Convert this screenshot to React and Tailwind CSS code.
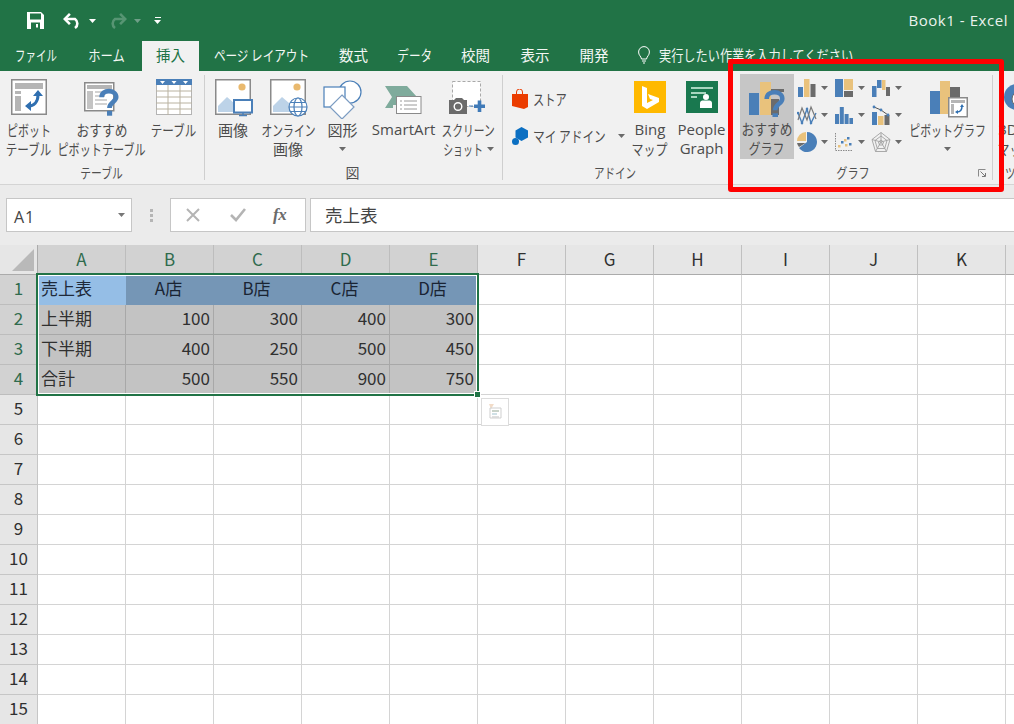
import React from "react";

const jp = "font-['Open_Sans','Noto_Sans_CJK_JP',sans-serif]";

function Caret({ color = "#6a6a6a", className = "" }) {
  return (
    <svg width="7" height="4" viewBox="0 0 7 4" className={className}>
      <path d="M0 0h7L3.500 4z" fill={color} />
    </svg>
  );
}

function L({ children, className = "" }) {
  return <div className={`whitespace-nowrap h-[19px] leading-[19px] text-[15px] ${className}`}>{children}</div>;
}

function Btn({ w, icon, children, className = "" }) {
  return (
    <div className={`flex flex-col items-center shrink-0 ${w} ${className}`}>
      <div className="h-[49px] pt-[8px] flex justify-center w-full">{icon}</div>
      {children}
    </div>
  );
}

const Q = ({ x, y, s = 1, sw = 4.2 }) => (
  <g transform={`translate(${x} ${y}) scale(${s})`}>
    <path d="M1 7C1 3 4 1.500 7.500 1.500S14 3.500 14 6.800c0 4.200-6 4.600-6 9.700" fill="none" stroke="#4a7fb8" strokeWidth={sw} />
    <rect x="5.800" y="19" width="4.600" height="4.400" fill="#4a7fb8" />
  </g>
);

const PivotIcon = () => (
  <svg width="36" height="36" viewBox="0 0 36 36">
    <rect x=".75" y=".75" width="34.500" height="34.500" fill="#fff" stroke="#8a8a8a" strokeWidth="1.500" />
    <rect x="4" y="4" width="28" height="6" fill="#b5b5b5" />
    <rect x="4" y="12" width="6" height="3" fill="#b5b5b5" />
    <rect x="4" y="17" width="6" height="15" fill="#b5b5b5" />
    <path d="M27 16c0 7-4 11-10 11" fill="none" stroke="#2f6fb0" strokeWidth="3" />
    <path d="M27 11l5 6h-10zM14 27l6-5v10z" fill="#2f6fb0" />
  </svg>
);

const RecPivotIcon = () => (
  <svg width="40" height="40" viewBox="0 0 40 40" className="ml-[4px]">
    <rect x=".75" y="3.750" width="29" height="28" fill="#fff" stroke="#8a8a8a" strokeWidth="1.500" />
    <rect x="3" y="6" width="25" height="4" fill="#b5b5b5" />
    <rect x="3" y="12" width="6" height="18" fill="#c4c4c4" />
    <path d="M11 13h14M11 17h10M11 21h12M11 25h12" stroke="#c4c4c4" strokeWidth="1.500" />
    <Q x={16.5} y={10.5} s={1.12} />
  </svg>
);

const TableIcon = () => (
  <svg width="36" height="36" viewBox="0 0 36 36">
    <rect x=".5" y=".5" width="35" height="35" fill="#fff" stroke="#b4b4b4" />
    <rect width="36" height="6" fill="#4a7fb8" />
    <path d="M4 2h5l-2.500 3zM15.500 2h5L18 5zM27 2h5l-2.500 3z" fill="#fff" />
    <path d="M0 12h36M0 18h36M0 24h36M0 30h36M12 6v30M24 6v30" stroke="#b9b2a0" />
  </svg>
);

const Picture = ({ children }) => (
  <svg width="40" height="40" viewBox="0 0 40 40" className="overflow-visible translate-x-[2px]">
    <rect x=".75" y=".75" width="34.500" height="34.500" fill="#fff" stroke="#8a8a8a" strokeWidth="1.500" />
    <circle cx="27" cy="8" r="3.600" fill="#e9b96e" />
    <path d="M3 33V27l9-9 7 6 2 2 4 7z" fill="#bdd3e8" />
    {children}
  </svg>
);

const ImageIcon = () => (
  <Picture>
    <rect x="19" y="21" width="18" height="12.500" fill="#fff" stroke="#4a7fb8" strokeWidth="2" />
    <path d="M28 34v2M24 36.500h8" stroke="#4a7fb8" strokeWidth="1.500" />
  </Picture>
);

const OnlineIcon = () => (
  <Picture>
    <g fill="#fff" stroke="#4a7fb8" strokeWidth="1.200">
      <circle cx="28" cy="28" r="9" />
      <ellipse cx="28" cy="28" rx="4" ry="9" />
      <path d="M19 28h18M20.500 23.500h15M20.500 32.500h15" />
    </g>
  </Picture>
);

const ShapesIcon = () => (
  <svg width="40" height="40" viewBox="0 0 40 40">
    <circle cx="27" cy="13" r="11" fill="#fff" stroke="#4a7fb8" strokeWidth="1.200" />
    <rect x="1" y="8" width="21" height="20" fill="#fff" stroke="#4a7fb8" strokeWidth="1.200" />
    <path d="M19 16l12 12-12 12L7 28z" fill="#fff" stroke="#7c9cc2" strokeWidth="1.200" />
  </svg>
);

const SmartArtIcon = () => (
  <svg width="38" height="36" viewBox="0 0 38 36">
    <path d="M0 3h22l10 11v3H12v5H8v3H0l7-11z" fill="#7fab9c" />
    <rect x="11.500" y="13.500" width="24.500" height="17" fill="#fff" stroke="#8a8a8a" />
    <path d="M15 18h2M19 18h13M15 22h2M19 22h13M15 26h2M19 26h13" stroke="#9a9a9a" />
  </svg>
);

const ScreenIcon = () => (
  <svg width="38" height="36" viewBox="0 0 38 36">
    <rect x="3.500" y="2.500" width="28" height="25" fill="#fff" stroke="#a9a9a9" strokeDasharray="3 2" />
    <path d="M0 21h5l2-2h6l2 2h3v14H0z" fill="#6b6b6b" />
    <circle cx="9" cy="27.500" r="3.800" fill="none" stroke="#fff" strokeWidth="1.400" />
    <path d="M20 27h4" stroke="#4a7fb8" />
    <path d="M25 25.500h11v3.500H25zM28.700 21.500h3.600V33h-3.600z" fill="#3f7ab8" />
  </svg>
);

const BingIcon = () => (
  <svg width="32" height="32" viewBox="0 0 32 32">
    <rect width="32" height="32" fill="#ffb900" />
    <path d="M8 5l5 2v15l6-3-3-1-2-5 11 4v4L13 28l-5-3z" fill="#fff" />
  </svg>
);

const PeopleIcon = () => (
  <svg width="32" height="32" viewBox="0 0 32 32">
    <rect width="32" height="32" fill="#19784f" />
    <path d="M5 6h22v2H5zM5 11h15v2H5zM5 15h6v2H5z" fill="#a8d5bf" />
    <circle cx="20" cy="16" r="3" fill="#fff" />
    <path d="M14 27v-5c0-2 2-2.500 3-2.500h6c1 0 3 .5 3 2.500v5z" fill="#fff" />
  </svg>
);

const ColChart = () => (
  <svg width="18" height="18" viewBox="0 0 18 18">
    <rect x="0" y="8" width="5" height="10" fill="#4a7fb8" />
    <rect x="6" y="0" width="5.500" height="18" fill="#e9c27c" />
    <rect x="12.500" y="5" width="5" height="13" fill="#6b6b6b" />
  </svg>
);
const Treemap = () => (
  <svg width="18" height="18" viewBox="0 0 18 18">
    <rect width="8" height="18" fill="#4a7fb8" />
    <rect x="9" width="9" height="11" fill="#e9c27c" />
    <rect x="9" y="12" width="9" height="6" fill="#6b6b6b" />
  </svg>
);
const Waterfall = () => (
  <svg width="18" height="18" viewBox="0 0 18 18">
    <rect y="7" width="4.500" height="11" fill="#4a7fb8" />
    <rect x="5" y="1" width="4.500" height="8" fill="#4a7fb8" />
    <rect x="10" y="1" width="3.500" height="10" fill="#e9c27c" />
    <rect x="14" y="8" width="4" height="9" fill="#6b6b6b" />
  </svg>
);
const LineChart = () => (
  <svg width="20" height="20" viewBox="0 0 20 20">
    <path d="M1 8l4 10 5-14 4 14 5-10" fill="none" stroke="#4a7fb8" strokeWidth="1.400" />
    <path d="M1 15L5 3l5 12 4-13 5 12" fill="none" stroke="#7a7a7a" strokeWidth="1.200" />
    <g fill="#4a7fb8"><circle cx="5" cy="18" r="1.300" /><circle cx="10" cy="4" r="1.300" /><circle cx="14" cy="18" r="1.300" /><circle cx="1" cy="8" r="1.300" /></g>
  </svg>
);
const Histogram = () => (
  <svg width="18" height="18" viewBox="0 0 18 18">
    <path d="M0 8h4v10H0zM4.800 1h4v17h-4zM9.600 8h4v10h-4zM14.400 12H18v6h-3.600z" fill="#4a7fb8" />
  </svg>
);
const Combo = () => (
  <svg width="18" height="20" viewBox="0 0 18 20">
    <rect y="7" width="5" height="13" fill="#4a7fb8" />
    <rect x="6" y="11" width="5.500" height="9" fill="#e9c27c" />
    <rect x="12.500" y="10" width="5" height="10" fill="#6b6b6b" />
    <path d="M2 2l7 3 7 5" fill="none" stroke="#555" />
    <g fill="#4a7fb8"><circle cx="2" cy="2" r="1.400" /><circle cx="9" cy="5" r="1.400" /><circle cx="16" cy="10" r="1.400" /></g>
  </svg>
);
const Pie = () => (
  <svg width="20" height="20" viewBox="0 0 20 20">
    <path d="M10 10V0a10 10 0 1 1-8 16z" fill="#4a7fb8" />
    <path d="M9 9V0A9 9 0 0 0 0 9z" fill="#e9c27c" />
    <path d="M8.500 11H0a9 9 0 0 0 2 4z" fill="#6b6b6b" />
  </svg>
);
const Scatter = () => (
  <svg width="18" height="18" viewBox="0 0 18 18">
    <path d="M.5 0v17.500H18" fill="none" stroke="#8a8a8a" strokeDasharray="1.500 1" />
    <g fill="#4a7fb8"><rect x="12" y="4" width="2.500" height="2.500" /><rect x="6" y="8" width="2.500" height="2.500" /><rect x="14" y="10" width="2.500" height="2.500" /></g>
    <g fill="#e9c27c"><rect x="9" y="6" width="2.500" height="2.500" /><rect x="3" y="12" width="2.500" height="2.500" /><rect x="10" y="11" width="2.500" height="2.500" /></g>
  </svg>
);
const Radar = () => (
  <svg width="20" height="20" viewBox="0 0 20 20">
    <g fill="none" stroke="#a0a0a0" strokeWidth=".9">
      <path d="M10 .5l9 7-3.500 12h-11L1 7.500z" />
      <path d="M10 4l6 4.500-2.300 8H6.300L4 8.500z" />
      <path d="M10 8l2.500 2-1 3h-3l-1-3z" />
      <path d="M10 .5V10M19 7.500L10 10M15.500 19.500L10 10M4.500 19.500L10 10M1 7.500L10 10" />
    </g>
  </svg>
);

const SmallBtn = ({ icon, w = "w-[37px]" }) => (
  <div className={`${w} h-[27px] flex items-center pl-[1px] gap-[4px]`}>
    <div className="w-[20px] flex justify-center">{icon}</div>
    <Caret />
  </div>
);

const RecChartIcon = () => (
  <svg width="38" height="36" viewBox="0 0 38 36" className="translate-x-[1px]">
    <rect x="0" y="12" width="10" height="22" fill="#4a7fb8" />
    <rect x="11" y="1" width="11" height="33" fill="#e9c27c" />
    <rect x="22" y="8" width="13" height="3" fill="#6b6b6b" />
    <rect x="22" y="18" width="8" height="16" fill="#6b6b6b" />
    <Q x={16.5} y={9.5} s={1.2} sw={3.8} />
  </svg>
);

const PivotChartIcon = () => (
  <svg width="38" height="38" viewBox="0 0 38 38" className="translate-x-[1px]">
    <rect x="0" y="10" width="10" height="23" fill="#4a7fb8" />
    <rect x="10" y="0" width="10" height="33" fill="#e9c27c" />
    <rect x="20" y="6" width="10" height="27" fill="#6b6b6b" />
    <rect x="18.750" y="16.750" width="18.500" height="19" fill="#fff" stroke="#8a8a8a" strokeWidth="1.500" />
    <rect x="21" y="19" width="14" height="3" fill="#b5b5b5" />
    <rect x="21" y="23" width="3" height="10" fill="#b5b5b5" />
    <path d="M32 25c0 4-2 6-5 6" fill="none" stroke="#2f6fb0" strokeWidth="1.500" />
    <path d="M32 23l2 3h-4zM25 31l3-2v4z" fill="#2f6fb0" />
  </svg>
);

const Group = ({ w, label, children }) => (
  <div className={`flex flex-col h-full shrink-0 ${w}`}>
    <div className="flex flex-1">{children}</div>
    {label}
  </div>
);

const GroupLabel = ({ children, className = "" }) => (
  <div className={`h-[21px] mb-px flex justify-center items-center text-[14px] text-[#505050] whitespace-nowrap ${className}`}>{children}</div>
);

const Sep = () => <div className="w-px shrink-0 self-stretch my-[4px] bg-[#cfcfcf]" />;

const tabs = [
  ["ファイル", "w-[72px]", "scale-x-[0.72]"],
  ["ホーム", "w-[70px]", "scale-x-[0.85]"],
  ["挿入", "w-[57px]", "scale-x-100"],
  ["ページ レイアウト", "w-[125px]", "scale-x-[0.8]"],
  ["数式", "w-[59px]", "scale-x-100"],
  ["データ", "w-[64px]", "scale-x-[0.8]"],
  ["校閲", "w-[57px]", "scale-x-100"],
  ["表示", "w-[62px]", "scale-x-100"],
  ["開発", "w-[56px]", "scale-x-100"],
];

function TitleBar() {
  return (
    <div className="h-[41px] flex items-center relative text-white">
      <svg width="17" height="17" viewBox="0 0 17 17" className="ml-[27px]">
        <path d="M0 0h14l3 3v14H0z" fill="#fff" />
        <rect x="3" y="1.500" width="11" height="6" fill="#217346" />
        <rect x="4" y="10.500" width="9" height="6.500" fill="#217346" />
        <rect x="9" y="12" width="2" height="3.500" fill="#fff" />
      </svg>
      <svg width="20" height="16" viewBox="0 0 20 16" className="ml-[19px]">
        <path d="M3 6h9a5.500 5.500 0 0 1 0 9" fill="none" stroke="#fff" strokeWidth="2.600" />
        <path d="M8 0l1.800 1.800L5.500 6l4.300 4.200L8 12 2 6z" fill="#fff" transform="translate(-2 0)" />
      </svg>
      <Caret color="#fff" className="ml-[6px]" />
      <svg width="20" height="16" viewBox="0 0 20 16" className="ml-[11px] opacity-40">
        <path d="M17 6H8a5.500 5.500 0 0 0 0 9" fill="none" stroke="#a9c9b8" strokeWidth="2.600" />
        <path d="M12 0l-1.800 1.800L14.500 6l-4.300 4.200L12 12l6-6z" fill="#a9c9b8" transform="translate(2 0)" />
      </svg>
      <Caret color="#6f9f88" className="ml-[7px]" />
      <div className="ml-[13px] flex flex-col items-center gap-[2px]">
        <div className="w-[6px] h-px bg-white" />
        <Caret color="#fff" />
      </div>
      <div className="ml-auto mr-[6px] text-[15px] tracking-[0.55px] text-[#eaf2ed] font-['Open_Sans',sans-serif]">Book1 - Excel</div>
    </div>
  );
}

function Tabs() {
  return (
    <div className="h-[30px] flex items-stretch text-[14.5px]">
      {tabs.map(([t, w, s]) => (
        <div
          key={t}
          className={`${w} shrink-0 flex justify-center items-center pb-[2px] whitespace-nowrap ${t === "挿入" ? "bg-[#f1f1f1] text-[#217346]" : "text-[#f3f7f4]"}`}
        >
          <span className={`inline-block ${s}`}>{t}</span>
        </div>
      ))}
      <div className="flex items-center pb-[2px] pl-[16px] text-[#eef4f0] whitespace-nowrap">
        <svg width="12" height="18" viewBox="0 0 12 18" className="mr-[9px]">
          <path d="M3.500 13C3 10 .6 9.500.6 6a5.400 5.400 0 0 1 10.800 0c0 3.500-2.400 4-2.900 7zM4 15h4M5 17h2" fill="none" stroke="#fff" strokeWidth="1" />
        </svg>
        <span className="inline-block origin-left scale-x-[0.84]">実行したい作業を入力してください</span>
      </div>
    </div>
  );
}

function Ribbon() {
  return (
    <div className="h-[114px] bg-[#f1f1f1] border-b border-[#d4d4d4] flex text-[#4c4c4c] overflow-hidden">
      <Group w="w-[204px]" label={<GroupLabel><span className="inline-block scale-x-[0.77]">テーブル</span></GroupLabel>}>
        <Btn w="w-[58px]" icon={<PivotIcon />}>
          <L className="scale-x-[0.73]">ピボット</L>
          <L className="scale-x-[0.77]">テーブル</L>
        </Btn>
        <Btn w="w-[88px]" icon={<RecPivotIcon />}>
          <L className="scale-x-[0.85]">おすすめ</L>
          <L className="scale-x-[0.74]">ピボットテーブル</L>
        </Btn>
        <Btn w="w-[56px]" icon={<TableIcon />}>
          <L className="scale-x-[0.77]">テーブル</L>
        </Btn>
      </Group>
      <Sep />
      <Group w="w-[297px]" label={<GroupLabel className="pr-[2px]">図</GroupLabel>}>
        <Btn w="w-[56px]" icon={<ImageIcon />}>
          <L>画像</L>
        </Btn>
        <Btn w="w-[54px]" icon={<OnlineIcon />}>
          <L className="scale-x-[0.72]">オンライン</L>
          <L>画像</L>
        </Btn>
        <Btn w="w-[55px]" icon={<ShapesIcon />}>
          <L>図形</L>
          <div className="h-[19px] flex items-center"><Caret /></div>
        </Btn>
        <Btn w="w-[67px]" icon={<div className="pt-[4px]"><SmartArtIcon /></div>}>
          <L className={`${jp} tracking-[0.1px]`}>SmartArt</L>
        </Btn>
        <Btn w="w-[62px]" icon={<ScreenIcon />}>
          <L className="scale-x-[0.72]">スクリーン</L>
          <div className="flex items-center h-[19px] gap-[3px]">
            <div className="w-[42px] h-[19px] leading-[19px] text-[15px] flex justify-center whitespace-nowrap">
              <span className="block h-[19px] scale-x-[0.66]">ショット</span>
            </div>
            <Caret />
          </div>
        </Btn>
      </Group>
      <Sep />
      <Group w="w-[225px]" label={<GroupLabel className="pr-[1px]"><span className="inline-block scale-x-[0.75]">アドイン</span></GroupLabel>}>
        <div className="w-[122px] shrink-0 pl-[9px] pt-[16px] flex flex-col">
          <div className="h-[24px] flex items-center gap-[5px]">
            <svg width="16" height="20" viewBox="0 0 16 20">
              <path d="M0 5h16v13l-4 2-12-3z" fill="#eb3c00" />
              <path d="M4.500 6V3a3 3 0 0 1 6 0v3" fill="none" stroke="#eb3c00" />
            </svg>
            <span className="inline-block w-[34px] origin-left scale-x-[0.75] whitespace-nowrap text-[15px]">ストア</span>
          </div>
          <div className="h-[24px] mt-[13px] flex items-center gap-[5px]">
            <svg width="16" height="20" viewBox="0 0 16 20">
              <path d="M9.500 1L16 4.500v7L9.500 15 3.500 11.500v-7z" fill="#0b6fc2" />
              <circle cx="3.500" cy="15.500" r="3.500" fill="#0b6fc2" />
            </svg>
            <span className="inline-block w-[71px] origin-left scale-x-[0.78] whitespace-nowrap text-[15px]">マイ アドイン</span>
            <Caret className="ml-[9px]" />
          </div>
        </div>
        <Btn w="w-[50px]" icon={<div className="pt-[2px]"><BingIcon /></div>}>
          <L className={jp}>Bing</L>
          <L className="scale-x-[0.8]">マップ</L>
        </Btn>
        <Btn w="w-[53px]" icon={<div className="pt-[2px]"><PeopleIcon /></div>}>
          <L className={jp}>People</L>
          <L className={jp}>Graph</L>
        </Btn>
      </Group>
      <Group
        w="w-[264px]"
        label={
          <div className="flex items-center h-[21px] mb-px">
            <GroupLabel className="flex-1 mb-0"><span className="inline-block scale-x-[0.8]">グラフ</span></GroupLabel>
            <svg width="8" height="8" viewBox="0 0 8 8" className="mr-[6px]">
              <path d="M.5 7.500V.5h7" fill="none" stroke="#8a8a8a" />
              <path d="M2.500 2.500L7 7M7.500 4v3.500H4" fill="none" stroke="#777" />
            </svg>
          </div>
        }
      >
        <div className="ml-[12px] mt-[3px] w-[54px] h-[85px] bg-[#c6c6c6] shrink-0 flex flex-col items-center">
          <div className="h-[45px] pt-[7px] flex justify-center w-full"><RecChartIcon /></div>
          <L className="scale-x-[0.85]">おすすめ</L>
          <L className="scale-x-[0.8]">グラフ</L>
        </div>
        <div className="ml-[2px] mt-[3px] w-[111px] shrink-0 grid grid-cols-3 content-start">
          <SmallBtn icon={<ColChart />} />
          <SmallBtn icon={<Treemap />} />
          <SmallBtn icon={<Waterfall />} />
          <SmallBtn icon={<LineChart />} />
          <SmallBtn icon={<Histogram />} />
          <SmallBtn icon={<Combo />} />
          <SmallBtn icon={<Pie />} />
          <SmallBtn icon={<Scatter />} />
          <SmallBtn icon={<Radar />} />
        </div>
        <Btn w="w-[81px]" icon={<div className="pt-[2px]"><PivotChartIcon /></div>}>
          <L className="scale-x-[0.73]">ピボットグラフ</L>
          <div className="h-[19px] flex items-center"><Caret /></div>
        </Btn>
      </Group>
      <Sep />
      <Group
        w="w-[60px]"
        label={<GroupLabel className="justify-start pl-[12px] mb-px"><span className="inline-block origin-left scale-x-[0.75]">ツアー</span></GroupLabel>}
      >
        <div className="flex flex-col items-center w-[30px]">
          <div className="h-[49px] pt-[12px]">
            <svg width="26" height="28" viewBox="0 0 26 28" className="translate-x-[9px]">
              <circle cx="13" cy="14" r="13" fill="#4a7fb8" />
              <circle cx="16" cy="16" r="8" fill="#fff" stroke="#6b6b6b" />
            </svg>
          </div>
          <L className={jp}>3D</L>
          <L className="scale-x-[0.8] ml-[14px]">マップ</L>
        </div>
      </Group>
    </div>
  );
}

function FormulaBar() {
  return (
    <div className="h-[60px] bg-[#ebebeb] pt-[13px] pb-[13px] flex items-stretch">
      <div className="ml-[6px] w-[126px] h-[34px] bg-white border border-[#c6c6c6] flex items-center justify-between pl-[7px] pr-[6px]">
        <span className={`text-[16px] pt-[3px] tracking-[0.8px] text-[#444] ${jp}`}>A1</span>
        <Caret color="#777" />
      </div>
      <div className="w-[38px] flex flex-col items-center justify-center gap-[2px]">
        <div className="w-[3px] h-[3px] bg-[#b5b5b5]" />
        <div className="w-[3px] h-[3px] bg-[#b5b5b5]" />
        <div className="w-[3px] h-[3px] bg-[#b5b5b5]" />
      </div>
      <div className="w-[136px] h-[34px] bg-white border border-[#c6c6c6] flex items-center">
        <svg width="14" height="14" viewBox="0 0 14 14" className="ml-[15px]">
          <path d="M1 1l12 12M13 1L1 13" stroke="#b4b4b4" strokeWidth="2" />
        </svg>
        <svg width="16" height="14" viewBox="0 0 16 14" className="ml-[30px]">
          <path d="M1 7l5 5 9-11" fill="none" stroke="#b4b4b4" strokeWidth="2.600" />
        </svg>
        <span className="ml-[27px] font-['Liberation_Serif',serif] italic font-bold text-[17px] text-[#6a6a6a] tracking-[-0.5px]">fx</span>
      </div>
      <div className="ml-[4px] flex-1 h-[34px] bg-white border border-[#c6c6c6] border-r-0 flex items-center pl-[14px] text-[17.5px] text-[#444]">
        売上表
      </div>
    </div>
  );
}

const cols = ["A", "B", "C", "D", "E", "F", "G", "H", "I", "J", "K"];
const data = [
  ["売上表", "A店", "B店", "C店", "D店"],
  ["上半期", "100", "300", "400", "300"],
  ["下半期", "400", "250", "500", "450"],
  ["合計", "500", "550", "900", "750"],
];

function cellClass(r, c) {
  if (r === 0 && c === 0) return "bg-[#95bee6] border-[#95bee6] pl-[3px] text-[#1f2a3a]";
  if (r === 0 && c < 5) return "bg-[#7596b6] border-[#7596b6] justify-center pr-[2px] text-[#1a2433]";
  if (r < 4 && c === 0) return "bg-[#c3c3c3] border-[#a8a8a8] pl-[3px]";
  if (r < 4 && c < 5) return "bg-[#c3c3c3] border-[#a8a8a8] justify-end pr-[3px]";
  return "bg-white border-[#d4d4d4]";
}

function Sheet() {
  const rows = Array.from({ length: 15 }, (_, i) => i);
  return (
    <div className="relative grid grid-cols-[38px_repeat(11,88px)_40px] auto-rows-[30px] text-[17px] text-[#303030]">
      <div className="bg-[#e6e6e6] border-r border-b border-[#ababab] flex items-end justify-end pr-[3px] pb-[3px]">
        <svg width="22" height="22" viewBox="0 0 22 22"><path d="M22 0v22H0z" fill="#b9b9b9" /></svg>
      </div>
      {cols.map((c, i) => (
        <div
          key={c}
          className={`flex items-center justify-center pb-[2px] border-r border-b ${
            i < 5 ? "bg-[#d2d2d2] border-[#bdbdbd] text-[#2f6b4d]" : "bg-[#e6e6e6] border-[#c0c0c0] border-b-[#ababab] text-[#303030]"
          }`}
        >
          {c}
        </div>
      ))}
      <div className="bg-[#e6e6e6] border-b border-[#ababab]" />
      {rows.map((r) => (
        <React.Fragment key={r}>
          <div
            className={`flex items-center justify-center pb-[3px] border-r border-b ${
              r < 4 ? "bg-[#d2d2d2] border-[#bdbdbd] text-[#2f6b4d]" : "bg-[#e6e6e6] border-[#c6c6c6] text-[#303030]"
            }`}
          >
            {r + 1}
          </div>
          {cols.map((c, ci) => (
            <div key={c} className={`flex items-center pb-[3px] border-r border-b ${cellClass(r, ci)}`}>
              {r < 4 && ci < 5 ? data[r][ci] : null}
            </div>
          ))}
          <div className="bg-white border-b border-[#d4d4d4]" />
        </React.Fragment>
      ))}
      <div className="absolute left-[36px] top-[28px] w-[443px] h-[123px] border-2 border-[#217346] shadow-[inset_0_0_0_1px_#fff] pointer-events-none" />
      <div className="absolute left-[474px] top-[146px] w-[7px] h-[7px] bg-[#217346] border border-white" />
      <div className="absolute left-[481px] top-[153px] w-[28px] h-[28px] bg-white border border-[#dcdcdc] flex items-center justify-center">
        <svg width="18" height="18" viewBox="0 0 18 18">
          <path d="M3 1l5 0-3 5z" fill="#f2dcc8" />
          <path d="M4 5h11v10H4z" fill="none" stroke="#cfcfcf" />
          <path d="M6 8h7" stroke="#c9d3c9" strokeWidth="2" />
          <path d="M6 11h5" stroke="#cfe0e6" strokeWidth="2" />
          <path d="M6 14h7" stroke="#d6d6d6" strokeWidth="1.500" />
        </svg>
      </div>
    </div>
  );
}

export default function App() {
  return (
    <div className="relative w-[1014px] h-[724px] overflow-hidden bg-white font-['Noto_Sans_CJK_JP',sans-serif]">
      <div className="bg-[#217346]">
        <TitleBar />
        <Tabs />
      </div>
      <Ribbon />
      <FormulaBar />
      <Sheet />
      <div className="absolute left-[728px] top-[59px] w-[276px] h-[133px] border-[5px] border-[#ff0000] rounded-[3px] pointer-events-none" />
    </div>
  );
}
